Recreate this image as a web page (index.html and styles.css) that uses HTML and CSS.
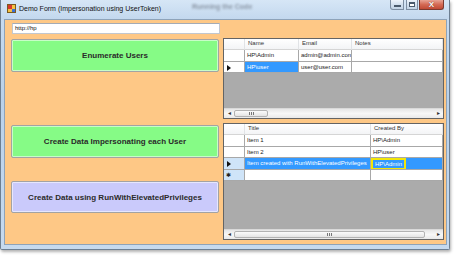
FILE: index.html
```html
<!DOCTYPE html>
<html lang="en">
<head>
    <meta charset="UTF-8">
    <meta name="viewport" content="width=device-width, initial-scale=1.0">
    <title>Demo Form</title>
    <link rel="stylesheet" href="styles.css">
</head>
<body>
    <div class="window">
        <div class="titlebar">
            <svg class="app-icon" width="9" height="9" viewBox="0 0 9 9">
                <rect x="0" y="0" width="9" height="9" fill="#f4c242"/>
                <rect x="0" y="0" width="5" height="5" fill="#d83a2a"/>
                <rect x="5" y="5" width="4" height="4" fill="#3b6fd6"/>
                <rect x="0.5" y="0.5" width="8" height="8" fill="none" stroke="#7a5a20" stroke-width="1"/>
            </svg>
            <span class="title">Demo Form (Impersonation using UserToken)</span>
            <span class="ghost">Running the Code</span>
            <div class="controls">
                <span class="ctl min"><i></i></span>
                <span class="ctl max"><i></i></span>
                <span class="ctl close">X</span>
            </div>
        </div>

        <div class="client">
            <div class="url">http://hp</div>
            <div class="panes">
                <div class="actions">
                    <button class="btn green first">Enumerate Users</button>
                    <button class="btn green second">Create Data Impersonating each User</button>
                    <button class="btn lilac third">Create Data using RunWithElevatedPrivileges</button>
                </div>

                <div class="grids">
                    <!-- users grid -->
                    <div class="dg users">
                        <div class="dg-rows">
                            <div class="hd corner"></div>
                            <div class="hd">Name</div>
                            <div class="hd">Email</div>
                            <div class="hd">Notes</div>

                            <div class="rh"></div>
                            <div class="c">HP\Admin</div>
                            <div class="c">admin@admin.com</div>
                            <div class="c"></div>

                            <div class="rh"><span class="arrow"></span></div>
                            <div class="c sel">HP\user</div>
                            <div class="c">user@user.com</div>
                            <div class="c"></div>
                        </div>
                        <div class="dg-empty"></div>
                        <div class="hscroll">
                            <span class="sb-btn">&#9666;</span>
                            <span class="thumb small"><b></b></span>
                            <span class="track"></span>
                            <span class="sb-btn">&#9656;</span>
                        </div>
                    </div>

                    <!-- items grid -->
                    <div class="dg items">
                        <div class="dg-rows">
                            <div class="hd corner"></div>
                            <div class="hd">Title</div>
                            <div class="hd">Created By</div>

                            <div class="rh"></div>
                            <div class="c">Item 1</div>
                            <div class="c">HP\Admin</div>

                            <div class="rh"></div>
                            <div class="c">Item 2</div>
                            <div class="c">HP\user</div>

                            <div class="rh cur"><span class="arrow"></span></div>
                            <div class="c sel">Item created with RunWithElevatedPrivileges</div>
                            <div class="c sel"><span class="mark">HP\Admin</span></div>

                            <div class="rh cur"><span class="star">&#10033;</span></div>
                            <div class="c"></div>
                            <div class="c"></div>
                        </div>
                        <div class="dg-empty"></div>
                        <div class="hscroll">
                            <span class="sb-btn">&#9666;</span>
                            <span class="thumb wide"><b></b></span>
                            <span class="track"></span>
                            <span class="sb-btn">&#9656;</span>
                        </div>
                    </div>
                </div>
            </div>
        </div>
    </div>
</body>
</html>
```

FILE: styles.css
```css
* {
    box-sizing: border-box;
    margin: 0;
    padding: 0;
}

body {
    background: #ffffff;
    font-family: 'Liberation Sans', Arial, sans-serif;
    color: #222;
    width: 468px;
    height: 264px;
    overflow: hidden;
}

/* window frame */
.window {
    width: 450px;
    height: 250px;
    border: 1px solid #6d7f92;
    border-top: none;
    border-radius: 0 0 2px 2px;
    background: linear-gradient(#c9ddf1, #b9d1ea 40%, #c6daef);
    padding: 0 2px 4px 3px;
    box-shadow: 1px 2px 3px rgba(0, 0, 0, 0.3);
}

.titlebar {
    height: 19px;
    display: flex;
    align-items: flex-start;
    background: linear-gradient(#d6e6f6, #c3d8ee);
    margin: 0 -2px 0 -3px;
    padding: 0 5px 0 6px;
}

.app-icon {
    margin-top: 4px;
    flex: none;
}

.title {
    font-size: 7px;
    line-height: 8px;
    margin: 5px 0 0 3px;
    color: #111;
    white-space: nowrap;
}

.ghost {
    font-size: 7px;
    font-weight: bold;
    color: #8b97a6;
    margin: 3px 0 0 31px;
    filter: blur(0.8px);
    white-space: nowrap;
}

.controls {
    margin-left: auto;
    display: flex;
    gap: 1px;
}

.ctl {
    height: 10px;
    border: 1px solid #7d8ea2;
    border-top: none;
    background: linear-gradient(#eef4fb, #d3e0ee 50%, #c3d4e6);
    display: flex;
    align-items: center;
    justify-content: center;
}

.ctl.min {
    width: 14px;
    border-radius: 0 0 0 3px;
}

.ctl.min i {
    width: 5px;
    height: 2px;
    margin-top: 3px;
    background: #fff;
    border: 1px solid #4a5a6c;
    box-sizing: content-box;
    height: 0;
}

.ctl.max {
    width: 12px;
    margin-left: 1px;
}

.ctl.max i {
    width: 6px;
    height: 5px;
    border: 1px solid #4a5a6c;
    border-top-width: 2px;
    background: #fff;
}

.ctl.close {
    width: 25px;
    border-color: #7b3a30;
    border-radius: 0 0 3px 0;
    background: linear-gradient(#e8a495, #d46a55 50%, #c04a35);
    color: #fff;
    font-size: 8px;
    font-weight: bold;
    line-height: 9px;
    text-shadow: 0 0 1px #5a1a10;
}

/* client area */
.client {
    width: 443px;
    height: 226px;
    background: #fec886;
    border: 1px solid #8ea3b9;
    padding: 3px 2px 0 6px;
}

.url {
    width: 208px;
    height: 11px;
    margin-left: 1px;
    background: #fff;
    border: 1px solid #c1c7cf;
    border-top-color: #a4abb5;
    font-size: 6px;
    line-height: 9px;
    padding-left: 2px;
    color: #111;
}

.panes {
    display: flex;
    gap: 4px;
    margin-top: 4px;
}

.actions {
    width: 208px;
    display: flex;
    flex-direction: column;
    padding-top: 1px;
}

.btn {
    font-family: 'Liberation Sans', Arial, sans-serif;
    font-size: 8px;
    font-weight: bold;
    color: #2a2a2a;
    border: 1px solid #a3a3a3;
    border-radius: 2px;
    box-shadow: inset 0 0 0 1px rgba(255, 255, 255, 0.55);
    width: 208px;
}

.btn.green {
    background: #86fb86;
}

.btn.lilac {
    background: #cacafb;
}

.btn.first {
    height: 33px;
}

.btn.second {
    height: 33px;
    margin-top: 53px;
}

.btn.third {
    height: 32px;
    margin-top: 23px;
}

/* data grids */
.grids {
    width: 221px;
    display: flex;
    flex-direction: column;
    gap: 4px;
}

.dg {
    border: 1px solid #646464;
    background-color: #ababab;
    background-image: radial-gradient(#b4b4b4 0.5px, transparent 0.6px);
    background-size: 2px 2px;
    display: flex;
    flex-direction: column;
    overflow: hidden;
}

.dg.users {
    height: 81px;
}

.dg.items {
    height: 117px;
}

.dg-rows {
    display: grid;
    background: #fff;
    font-size: 6px;
    line-height: 11px;
}

.users .dg-rows {
    grid-template-columns: 21px 54px 53px 1fr;
    grid-template-rows: 11px 12px 11px;
}

.items .dg-rows {
    grid-template-columns: 21px 126px 1fr;
    grid-template-rows: 11px 12px 11px 12px 11px;
}

.hd {
    background: linear-gradient(#ffffff, #f3f4f6);
    border-right: 1px solid #e1e3e6;
    border-bottom: 1px solid #d5d5d5;
    padding-left: 3px;
    line-height: 9px;
    color: #333;
}

.hd.corner {
    padding: 0;
}

.rh {
    background: #fff;
    border-right: 1px solid #a8a8a8;
    border-bottom: 1px solid #a8a8a8;
    position: relative;
}

.rh.cur {
    background: #cfe4f8;
}

.c {
    border-right: 1px solid #a8a8a8;
    border-bottom: 1px solid #a8a8a8;
    padding-left: 2px;
    white-space: nowrap;
    overflow: hidden;
    color: #1a1a1a;
}

.c.sel {
    background: #3399ff;
    color: #fff;
}

.arrow {
    position: absolute;
    left: 3px;
    top: 3px;
    border-left: 4px solid #111;
    border-top: 3px solid transparent;
    border-bottom: 3px solid transparent;
}

.star {
    position: absolute;
    left: 2px;
    top: 0;
    font-size: 6px;
    color: #222;
}

.mark {
    display: inline-block;
    margin-left: -2px;
    padding: 0 2px;
    height: 12px;
    line-height: 9px;
    border: 2px solid #f2e60a;
}

.dg-empty {
    flex: 1;
}

.hscroll {
    height: 10px;
    display: flex;
    align-items: stretch;
    background: linear-gradient(#e6e6e6, #f7f7f7 50%, #e9e9e9);
    border-top: 1px solid #d9d9d9;
}

.sb-btn {
    width: 10px;
    font-size: 6px;
    line-height: 9px;
    text-align: center;
    color: #333;
}

.thumb {
    margin: 1px 0;
    border: 1px solid #b2b2b2;
    border-radius: 2px;
    background: linear-gradient(#fbfbfb, #e4e4e4);
    display: flex;
    align-items: center;
    justify-content: center;
}

.thumb b {
    width: 5px;
    height: 3px;
    border-left: 1px solid #777;
    border-right: 1px solid #777;
    background: linear-gradient(90deg, transparent 1px, #777 1px, #777 2px, transparent 2px);
}

.thumb.small {
    width: 34px;
}

.thumb.wide {
    width: 191px;
}

.track {
    flex: 1;
}
```
